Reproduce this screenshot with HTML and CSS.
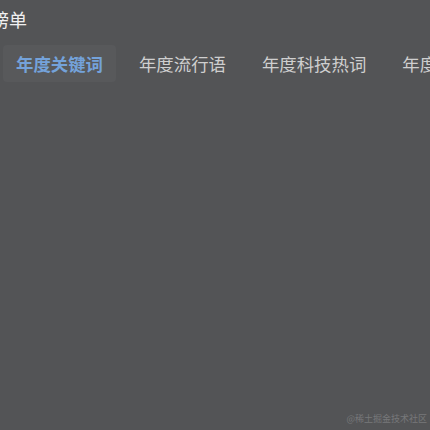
FILE: index.html
```html
<!DOCTYPE html>
<html lang="zh-CN">
<head>
<meta charset="utf-8">
<link rel="stylesheet" href="styles.css">
</head>
<body>
<div class="page">
  <h2 class="title">榜单</h2>
  <div class="tabs">
    <div class="tab active">年度关键词</div>
    <div class="tab">年度流行语</div>
    <div class="tab">年度科技热词</div>
    <div class="tab">年度网络热梗</div>
  </div>
</div>
<div class="watermark">@稀土掘金技术社区</div>
</body>
</html>
```
FILE: styles.css
```css
html, body {
  margin: 0;
  padding: 0;
  background: #535456;
  width: 430px;
  height: 430px;
  overflow: hidden;
  font-family: "Noto Sans CJK SC", "Noto Sans", sans-serif;
}
.page {
  position: relative;
  height: 430px;
}
.title {
  margin: 0 0 0 -9px;
  padding-top: 6px;
  font-size: 18px;
  font-weight: 400;
  line-height: 26px;
  color: #f0f0f0;
}
.tabs {
  display: flex;
  gap: 10px;
  margin-top: 13px;
  margin-left: 3px;
  white-space: nowrap;
}
.tab {
  flex: none;
  padding: 6px 13px;
  font-size: 17.4px;
  line-height: 25px;
  color: #cfcfcf;
  border-radius: 4px;
}
.tab.active {
  background: #58595b;
  color: #74a2da;
  font-weight: 700;
}
.watermark {
  position: absolute;
  right: 3px;
  bottom: 5px;
  font-size: 9px;
  color: #77787a;
  font-family: "Noto Sans CJK SC", serif;
}
```
